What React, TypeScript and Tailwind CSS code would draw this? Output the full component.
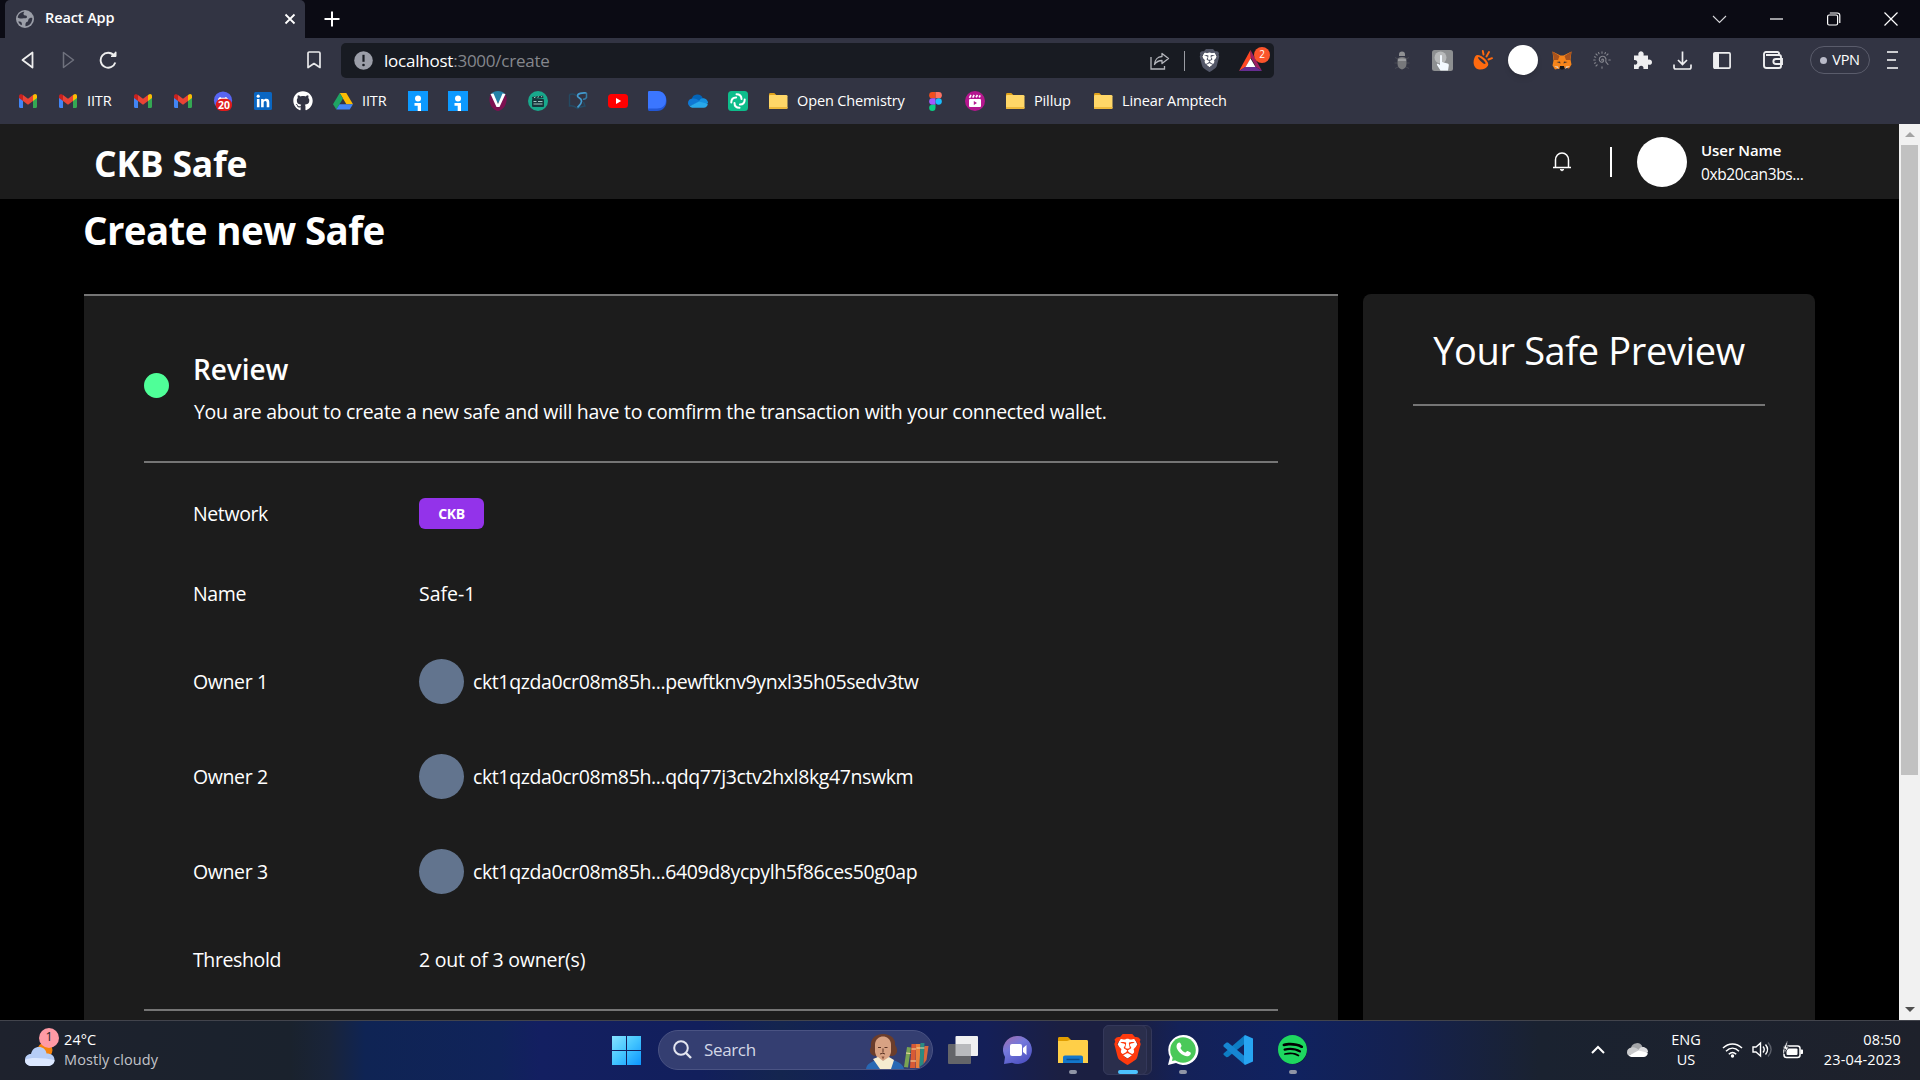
import type { ReactNode } from "react";
import { FaGithub } from "react-icons/fa";
import { SiBrave, SiSpotify } from "react-icons/si";

function GmailIcon() {
  return (
    <svg width="18" height="14" viewBox="0 0 18 14">
      <path d="M0 2v10.8C0 13.5.5 14 1.2 14H4V5z" fill="#4285f4" />
      <path d="M18 2v10.8c0 .7-.5 1.2-1.2 1.2H14V5z" fill="#34a853" />
      <path d="M14 1.2V7l4-3V1.9C18 .2 16 -.6 14.700.6z" fill="#fbbc04" />
      <path d="M4 7V1l5 3.8L14 1v6l-5 3.800z" fill="#ea4335" />
      <path d="M0 1.900V4l4 3V1.200L3.300.6C2-.4 0 .3 0 1.900z" fill="#c5221f" />
    </svg>
  );
}

function FolderIcon() {
  return (
    <svg width="20" height="20" viewBox="0 0 20 20">
      <path d="M1 3.500c0-.8.500-1.500 1.300-1.500h4l2 2H18v5H1z" fill="#e0a21b" />
      <rect x="1" y="4" width="18.500" height="14" rx="1.300" fill="#ffd768" />
      <path d="M1 16h18.500v.7c0 .8-.6 1.300-1.300 1.300H2.300c-.7 0-1.300-.5-1.300-1.300z" fill="#efba3c" />
    </svg>
  );
}

function DriveIcon() {
  return (
    <svg width="20" height="18" viewBox="0 0 20 18">
      <path d="M6.700 1h6.600L20 12.300h-6.600z" fill="#fbbc04" />
      <path d="M6.700 1L0 12.300 3.300 17.500 10 6.500z" fill="#1fa463" />
      <path d="M6.500 12.300H20l-3.300 5.200H3.300z" fill="#4285f4" />
    </svg>
  );
}

function DiscordIcon() {
  return (
    <svg width="22" height="22" viewBox="0 0 22 22">
      <circle cx="11" cy="10.500" r="10" fill="#5865f2" />
      <path d="M5 13c0-4 1.500-6.500 3-6.500l1 .8h4l1-.8c1.500 0 3 2.500 3 6.500z" fill="#fff" />
      <rect x="3" y="8.500" width="18" height="13.500" rx="6.500" fill="#e01b1b" />
      <text x="12" y="19.300" textAnchor="middle" fontSize="11.500" fontWeight="700" fill="#fff" fontFamily="Open Sans, sans-serif">20</text>
    </svg>
  );
}

function LinkedInIcon() {
  return (
    <svg width="18" height="18" viewBox="0 0 18 18">
      <rect width="18" height="18" rx="1.500" fill="#0a66c2" />
      <circle cx="4.200" cy="4.200" r="1.600" fill="#fff" />
      <path d="M2.900 7h2.600v8.200H2.900zM7.100 7h2.500v1.200c.5-.8 1.400-1.400 2.600-1.400 2.500 0 3.100 1.600 3.100 3.900v4.500h-2.600v-4c0-1.100-.2-2.100-1.400-2.100-1.300 0-1.600.9-1.600 2v4.100H7.100z" fill="#fff" />
    </svg>
  );
}

function InfoTileIcon() {
  return (
    <svg width="20" height="20" viewBox="0 0 20 20">
      <rect width="20" height="20" fill="#0c99ff" />
      <circle cx="10" cy="7.500" r="3" fill="#fff" />
      <path d="M6.500 12H13v8h-3.300v-5.300H6.500z" fill="#fff" />
    </svg>
  );
}

function VIcon() {
  return (
    <svg width="18" height="20" viewBox="0 0 18 20">
      <path d="M2 3C5-1 13-1 16 3l-7 9z" fill="#2382a8" />
      <path d="M1.500 3C-1.500 10 2 19 9 20c7-1 10.500-10 7.500-17L9 15z" fill="#7c1150" />
      <path d="M1.500 3l3-.5L9 13l4.500-10.500 3 .5L10.500 16h-3z" fill="#fff" />
    </svg>
  );
}

function ClapperIcon() {
  return (
    <svg width="20" height="20" viewBox="0 0 20 20">
      <circle cx="10" cy="10" r="10" fill="#18a98c" />
      <path d="M4 6l11-1.500.4 2.500L4.400 8.300z" fill="#17363b" />
      <rect x="4" y="8" width="12" height="8" rx="1" fill="#17363b" />
      <path d="M6 6.800l1.500-.8M9.500 6.400L11 5.600M13 6l1.300-.8M5.500 10.500h3M10 10.500h4.500M5.500 13h9" stroke="#c9eee5" strokeWidth=".8" />
    </svg>
  );
}

function BookPenIcon() {
  return (
    <svg width="20" height="18" viewBox="0 0 20 18" fill="none">
      <path d="M1.500 2.500c2-.7 5-.7 6.500 1M1.500 2.500V14c3-.8 5 0 8 2.500 2-1.500 4-2 7.500-2.500l-1.500-4" stroke="#254a63" strokeWidth="1.400" />
      <path d="M18.500 1c-4.500-.5-9 .5-9 3 0 2 4.500 1.500 4 5.500-.4 3-2 3.500-4 6" stroke="#429bd0" strokeWidth="1.700" />
      <path d="M18.500 1v4.500c-1 1.500-2.500 2-3.500 1.500" stroke="#357ba6" strokeWidth="1.500" />
    </svg>
  );
}

function YoutubeIcon() {
  return (
    <svg width="20" height="14" viewBox="0 0 20 14">
      <rect width="20" height="14" rx="3.500" fill="#f00" />
      <path d="M8 4l5.200 3L8 10z" fill="#fff" />
    </svg>
  );
}

function DIcon() {
  return (
    <svg width="19" height="20" viewBox="0 0 19 20">
      <path d="M0 1.500C0 .6.600 0 1.500 0H9c6 0 9.500 4.500 9.500 10S15 20 9 20H1.500C.6 20 0 19.400 0 18.500z" fill="#2257d6" />
      <path d="M0 1.500C0 .6.600 0 1.500 0H9c6 0 9 4 9 9s-3.500 8.500-9 8.500H0z" fill="#3b76ff" />
    </svg>
  );
}

function OneDriveIcon({ mono = false }: { mono?: boolean }) {
  return (
    <svg width="21" height="14" viewBox="0 0 21 14">
      <path d="M4 5a6 6 0 0 1 11.500-1L12 9 3 11z" fill={mono ? "#a3a5a8" : "#0364b8"} />
      <path d="M4.500 4.500C2 4.700 0 6.500 0 9.200 0 10.500.6 11.800 1.600 12.600L13 7.500 9 5C7.500 4.200 6 4.200 4.500 4.500z" fill={mono ? "#c9cacc" : "#0f78d4"} />
      <path d="M15.500 4c3.300-.1 5.500 2.300 5.500 5l-4 2-5.500-3.500C12 5.500 13.500 4.100 15.500 4z" fill={mono ? "#dddddf" : "#1490df"} />
      <path d="M1.600 12.600L11.500 7.500 20.800 9.800c0 2.400-1.800 4.200-4.300 4.200H4.500c-1 0-2.100-.5-2.900-1.400z" fill={mono ? "#ffffff" : "#28a8ea"} />
    </svg>
  );
}

function ElementIcon() {
  return (
    <svg width="20" height="20" viewBox="0 0 20 20">
      <rect width="20" height="20" rx="3.500" fill="#0dbd8b" />
      <g fill="none" stroke="#fff" strokeWidth="2" strokeLinecap="round">
        <path d="M8.500 3.300c3.200 0 5 2 5 4.800" />
        <path d="M16.700 8.500c0 3.200-2 5-4.800 5" />
        <path d="M11.500 16.700c-3.200 0-5-2-5-4.800" />
        <path d="M3.300 11.500c0-3.200 2-5 4.800-5" />
      </g>
    </svg>
  );
}

function FigmaIcon() {
  return (
    <svg width="13" height="19" viewBox="0 0 12 18">
      <path d="M3 0h3v6H3a3 3 0 0 1 0-6z" fill="#f24e1e" />
      <path d="M6 0h3a3 3 0 0 1 0 6H6z" fill="#ff7262" />
      <path d="M3 6h3v6H3a3 3 0 0 1 0-6z" fill="#a259ff" />
      <circle cx="9" cy="9" r="3" fill="#1abcfe" />
      <path d="M3 12h3v3a3 3 0 1 1-3-3z" fill="#0acf83" />
    </svg>
  );
}

function MovieIcon() {
  return (
    <svg width="20" height="20" viewBox="0 0 20 20">
      <circle cx="10" cy="10" r="10" fill="#b5178f" />
      <rect x="4" y="8" width="12" height="8" rx="1" fill="#fff" />
      <path d="M4.500 6.800L6 4M7.700 6.600L9.200 4M11 6.300L12.500 4M14.200 6.300l1-2" stroke="#fff" strokeWidth="1.600" />
      <path d="M8.800 10v4l3.200-2z" fill="#b5178f" />
    </svg>
  );
}

interface Bookmark {
  icon: ReactNode;
  label?: string;
  width: string;
}

const bookmarks: Bookmark[] = [
  { icon: <GmailIcon />, width: "w-10" },
  { icon: <GmailIcon />, label: "IITR", width: "w-[75px]" },
  { icon: <GmailIcon />, width: "w-10" },
  { icon: <GmailIcon />, width: "w-10" },
  { icon: <DiscordIcon />, width: "w-10" },
  { icon: <LinkedInIcon />, width: "w-10" },
  { icon: <FaGithub size={20} color="#fff" />, width: "w-10" },
  { icon: <DriveIcon />, label: "IITR", width: "w-[75px]" },
  { icon: <InfoTileIcon />, width: "w-10" },
  { icon: <InfoTileIcon />, width: "w-10" },
  { icon: <VIcon />, width: "w-10" },
  { icon: <ClapperIcon />, width: "w-10" },
  { icon: <BookPenIcon />, width: "w-10" },
  { icon: <YoutubeIcon />, width: "w-[39px]" },
  { icon: <DIcon />, width: "w-[41px]" },
  { icon: <OneDriveIcon />, width: "w-10" },
  { icon: <ElementIcon />, width: "w-10" },
  { icon: <FolderIcon />, label: "Open Chemistry", width: "w-[157px]" },
  { icon: <FigmaIcon />, width: "w-10" },
  { icon: <MovieIcon />, width: "w-10" },
  { icon: <FolderIcon />, label: "Pillup", width: "w-[88px]" },
  { icon: <FolderIcon />, label: "Linear Amptech", width: "w-[160px]" },
];

function TabStrip() {
  return (
    <div className="flex h-[38px] items-stretch bg-[#0b0b14] pl-[5px] pr-[22px]">
      <div className="flex w-[300px] items-center rounded-t-[5px] bg-[#323443] pl-[11px] pr-[9px]">
        <svg width="18" height="18" viewBox="0 0 18 18">
          <circle cx="9" cy="9" r="9" fill="#9b9ea8" />
          <path d="M8.500 1.800c-1 1-1.500 2.200-.5 3.200 1.200 1 2.500 0 3 1.700.3 1.300-1.500 1.700-2.800 1.600C6 8 4.500 9.500 1.700 7.500 2 4.500 5 1.800 8.500 1.800z" fill="#323443" />
          <path d="M16.300 8c-1.500-.5-3 .2-3.700 1.200-1 1.300.2 2-1.300 2.600-1.800.6-2 2-1.800 4.500 4 0 7-4 6.800-8.300zM2.200 11.500c1.500-.3 3 .2 3.500 1.300.3.900.2 1.700 0 2.500-1.500-.7-2.800-2-3.500-3.800z" fill="#323443" />
        </svg>
        <span className="-mt-[2px] ml-[11px] text-[14.500px] font-semibold tracking-[-0.1px]">React App</span>
        <svg className="ml-auto" width="12" height="12" viewBox="0 0 12 12" stroke="#fff" strokeWidth="1.800">
          <path d="M1.500 1.500l9 9M10.500 1.500l-9 9" />
        </svg>
      </div>
      <div className="flex items-center pl-[19px]">
        <svg width="16" height="16" viewBox="0 0 16 16" stroke="#fff" strokeWidth="2">
          <path d="M8 .5v15M.5 8h15" />
        </svg>
      </div>
      <div className="ml-auto flex items-center">
        <svg width="58" height="14" viewBox="0 0 58 14" fill="none" stroke="#d6d6da" strokeWidth="1.100">
          <path d="M9 4l6.500 6.500L22 4" />
        </svg>
        <svg width="58" height="14" viewBox="0 0 58 14" stroke="#fff" strokeWidth="1.200">
          <path d="M8 7h13" />
        </svg>
        <svg width="64" height="14" viewBox="0 0 64 14" fill="none" stroke="#fff" strokeWidth="1.200">
          <rect x="7.600" y="3" width="10" height="10" rx="1.500" />
          <path d="M9.800 1h7.400c1.600 0 2.600 1 2.600 2.600v7.400" />
        </svg>
        <svg width="14" height="14" viewBox="0 0 14 14" stroke="#fff" strokeWidth="1.200">
          <path d="M.5.5l13 13M13.500.5l-13 13" />
        </svg>
      </div>
    </div>
  );
}

function Slot({ width, children }: { width: string; children: ReactNode }) {
  return <div className={`flex h-10 shrink-0 items-center justify-center ${width}`}>{children}</div>;
}

function BraveLion({ size, color }: { size: number; color: string }) {
  return (
    <svg width={size} height={size} viewBox="0 0 24 24">
      <path d="M6.500 3h11l2 5-3 8-4.500 3-4.500-3-3-8z" fill="#fff" />
      <SiBrave size={24} color={color} />
    </svg>
  );
}

function AddressBar() {
  return (
    <div className="flex h-[35px] w-[933px] shrink-0 items-center rounded-[5px] bg-[#181b22] pl-[13px] pr-[3px]">
      <svg width="19" height="19" viewBox="0 0 19 19">
        <circle cx="9.500" cy="9.500" r="9.300" fill="#9b9ea8" />
        <path d="M9.500 3.800v7" stroke="#181b22" strokeWidth="2.200" />
        <circle cx="9.500" cy="14" r="1.300" fill="#181b22" />
      </svg>
      <span className="ml-[11px] text-[17px] tracking-[-0.23px] text-[#85878d]">
        <span className="text-white">localhost</span>:3000/create
      </span>
      <div className="ml-auto flex items-center">
        <svg width="20" height="18" viewBox="0 0 20 18" fill="none" stroke="#b4b6bc" strokeWidth="1.300">
          <path d="M1 5v12h13.500v-3" />
          <path d="M12 1.500l6.500 5-6.500 5v-3c-3.500 0-5.500 1-7.500 4 .3-4.500 3-8 7.500-8z" strokeLinejoin="round" />
        </svg>
        <div className="ml-[14px] h-5 w-px bg-[#9a9ca3]" />
        <div className="ml-[13px]">
          <BraveLion size={23} color="#535768" />
        </div>
        <div className="relative ml-[17px] w-[33px]">
          <svg width="26" height="22" viewBox="0 0 26 22">
            <path d="M12.500 0L1 21l6.500-4L13 8z" fill="#ff4724" />
            <path d="M12.500 0L24 21l-6-4L12.500 7z" fill="#9e1f63" />
            <path d="M1 21h23l-6-4H7z" fill="#662d91" />
            <path d="M12.500 8.500l5 8.500h-10z" fill="#fff" />
          </svg>
          <span className="absolute right-[1px] -top-[3px] flex h-4 w-4 items-center justify-center rounded-full bg-[#fb542b] text-[10px]">2</span>
        </div>
      </div>
    </div>
  );
}

function Toolbar() {
  return (
    <div className="flex h-[45px] items-center">
      <Slot width="w-[55px]">
        <svg className="-mt-[2px]" width="13" height="18" viewBox="0 0 13 18" fill="none" stroke="#eee" strokeWidth="1.800" strokeLinejoin="round">
          <path d="M11.500 1.500v15L1.500 9z" />
        </svg>
      </Slot>
      <Slot width="w-[26px]">
        <svg className="-mt-[2px]" width="13" height="18" viewBox="0 0 13 18" fill="none" stroke="#6f717d" strokeWidth="1.500" strokeLinejoin="round">
          <path d="M1.500 1.500v15L11.500 9z" />
        </svg>
      </Slot>
      <Slot width="w-[54px]">
        <svg className="-mt-[2px]" width="18" height="18" viewBox="0 0 18 18" fill="none" stroke="#eee" strokeWidth="1.900">
          <path d="M15 4.500A7.500 7.500 0 1 0 16.300 11.500" />
          <path d="M12 5.500h5V.8z" fill="#eee" strokeWidth="1" />
        </svg>
      </Slot>
      <div className="flex flex-1 justify-end pr-[20px]">
        <svg className="-mt-[1px]" width="14" height="18" viewBox="0 0 14 18" fill="none" stroke="#e8e8ea" strokeWidth="1.700" strokeLinejoin="round">
          <path d="M1 2.200C1 1.500 1.500 1 2.200 1h9.600c.7 0 1.200.5 1.200 1.200V16.500l-6-4-6 4z" />
        </svg>
      </div>
      <AddressBar />
      <div className="flex w-[646px] items-center pb-[1px] pl-[108px]">
        <Slot width="w-10">
          <svg width="16" height="20" viewBox="0 0 16 20">
            <path d="M4 9L1 7.500M12 9l3-1.500M3.500 13H.5M12.500 13h3M4 17l-3 1.500M12 17l3 1.500" stroke="#484a55" />
            <path d="M5 4.500a3 3 0 0 1 6 0V6H5z" fill="#8f9093" />
            <path d="M3.500 10c0-2 1.500-3 4.500-3s4.500 1 4.500 3v4c0 3-2 5-4.500 5.500C5.500 19 3.500 17 3.500 14z" fill="#77787b" />
            <path d="M4 9.500c1.500-1.300 6.500-1.300 8 0V11H4z" fill="#9b9c9f" />
          </svg>
        </Slot>
        <Slot width="w-10">
          <svg width="21" height="21" viewBox="0 0 21 21">
            <rect width="21" height="21" rx="2.500" fill="#8d8f91" />
            <circle cx="8.500" cy="7.500" r="6" fill="#b7b9ba" />
            <path d="M8 6c0-1.300 2-1.300 2 0v6l5.500 1.500c1 .3 1.500 1 1.300 2L16 20.500H8.500L5 15c-.5-1 .5-1.800 1.500-1L8 15z" fill="#f3f9ff" />
          </svg>
        </Slot>
        <Slot width="w-[41px]">
          <svg width="20" height="20" viewBox="0 0 20 20">
            <path d="M3 5.500C-.5 9-.8 19 6.500 19.500c4 .2 7-1 8.500-4z" fill="#ff6a0f" />
            <ellipse cx="9" cy="10.500" rx="3.200" ry="7.800" transform="rotate(-50 9 10.500)" fill="#ff6a0f" />
            <ellipse cx="8.800" cy="10.500" rx="1.200" ry="4.800" transform="rotate(-48 8.800 10.500)" fill="#323443" />
            <path d="M10.500 4.500L9.800 1M13.500 6.500L16 2M15.500 9.500l3.500-1.300" stroke="#ff6a0f" strokeWidth="1.900" strokeLinecap="round" />
          </svg>
        </Slot>
        <Slot width="w-[39px]">
          <div className="h-[30px] w-[30px] shrink-0 rounded-full bg-white shadow-md" />
        </Slot>
        <Slot width="w-10">
          <svg width="20" height="19" viewBox="0 0 20 19">
            <path d="M.5.5l8 4h3l8-4-1 8 1 5-2.500 4-4-1-1.500 1.500h-3L7 17.500l-4 1-2.500-4 1-5z" fill="#f6851b" />
            <path d="M.5.500L7.500 5 6 9 2 9zM19.500.500L12.500 5 14 9h4z" fill="#a8521d" />
            <path d="M4.500 11l3.500-.5.500 2zM15.500 11l-3.500-.5-.5 2z" fill="#44352f" />
            <path d="M2 15l4 .5L7 18zM18 15l-4 .5L13 18z" fill="#e8d2bd" />
            <path d="M8 15h4l.5 2.500L11 18.500H9L7.500 17.500z" fill="#161616" />
          </svg>
        </Slot>
        <Slot width="w-10">
          <svg width="18" height="18" viewBox="0 0 18 18" fill="none" stroke="#85868e" strokeWidth="1.100" strokeLinecap="round">
            <path d="M9 9.500c-.8-1 .8-2 1.500-.8.800 1.600-1 3-2.700 2.300-2.300-1-2-4.500.5-5.500 3-1 5.500 1.500 4.500 4.500-.3 1.500 1.200 2 2.200 3.500" />
            <path d="M9 .7v1.500M3 3l1.200 1.200M.7 9h1.500M3 15l1.200-1.200M9 17.300v-1.500M15 3l-1.200 1.200M17.300 9h-1.500M5.500 1.500l.6 1.200M12.500 1.500l-.6 1.200M1.500 5.800l1.200.5M1.500 12.300l1.200-.5" />
          </svg>
        </Slot>
        <Slot width="w-10">
          <svg width="19" height="18" viewBox="0 0 19 18">
            <path d="M1 4.500h4.500C4.800 2.500 5.700.2 8 .2s3.200 2.300 2.500 4.300H15v4.200c2-.6 4 .3 4 2.500s-2 3.100-4 2.400V18h-4.600c.6-2-.6-3.300-2.200-3.300S5.200 16 5.700 18H1v-4.500c2.200.6 3.300-.6 3.300-2.200S3.200 8.500 1 9z" fill="#eeeef0" />
          </svg>
        </Slot>
        <Slot width="w-10">
          <svg width="19" height="19" viewBox="0 0 19 19" fill="none" stroke="#eeeef0" strokeWidth="1.700">
            <path d="M9.500.5v12.500M5 9l4.500 4.500L14 9M1 13.500v2.800c0 1 .7 1.700 1.700 1.700h13.600c1 0 1.700-.7 1.700-1.700v-2.800" />
          </svg>
        </Slot>
        <Slot width="w-10">
          <svg width="18" height="17" viewBox="0 0 18 17">
            <rect x=".9" y=".9" width="16.200" height="15.200" rx="1" fill="none" stroke="#eeeef0" strokeWidth="1.700" />
            <rect x="1" y="1" width="5" height="15" fill="#eeeef0" />
          </svg>
        </Slot>
        <Slot width="w-[62px]">
          <svg width="20" height="18" viewBox="0 0 20 18" fill="none" stroke="#eeeef0" strokeWidth="1.900">
            <path d="M16 4V2.500C16 1.700 15.300 1 14.500 1H3C1.800 1 1 1.800 1 3v11.500C1 16 2 17 3.500 17H16c1.300 0 2-.7 2-2V6c0-1.200-.8-2-2-2H3" />
            <path d="M19 8h-6c-3.500 0-3.500 5 0 5h6z" />
          </svg>
        </Slot>
        <div className="ml-[6px] flex h-7 w-[60px] shrink-0 items-center justify-center gap-[5px] rounded-full border border-[#5a5c6b]">
          <span className="h-[7px] w-[7px] rounded-full bg-[#b9bac8]" />
          <span className="text-[14.500px] tracking-[-0.3px]">VPN</span>
        </div>
        <svg className="ml-[17px] shrink-0" width="12" height="18" viewBox="0 0 12 18" stroke="#fff" strokeWidth="1.700">
          <path d="M0 1h11M0 9h9M0 17h11" />
        </svg>
      </div>
    </div>
  );
}

function BookmarksBar() {
  return (
    <div className="flex h-[41px] items-start pl-[18px] pt-[8px]">
      {bookmarks.map((bookmark, i) => (
        <div key={i} className={`flex h-5 shrink-0 items-center ${bookmark.width}`}>
          <span className="flex w-5 shrink-0 items-center justify-center">{bookmark.icon}</span>
          {bookmark.label && (
            <span className="ml-[9px] whitespace-nowrap text-[14.500px] tracking-[-0.13px]">{bookmark.label}</span>
          )}
        </div>
      ))}
    </div>
  );
}

function SiteHeader() {
  return (
    <header className="flex h-[75px] shrink-0 items-center bg-[#1c1c1c] pl-[94px] pr-[94px]">
      <h1 className="mt-[5px] text-[35.500px] font-bold tracking-[-0.2px]">CKB Safe</h1>
      <svg className="ml-auto" width="18" height="20" viewBox="0 0 18 20" fill="none" stroke="#fff" strokeWidth="1.500">
        <path d="M2.500 15.500V8c0-4 2.800-7 6.500-7s6.500 3 6.500 7v7.500M0 15.500h18" />
        <path d="M7 17.500h4l-2 1.500z" fill="#fff" strokeWidth=".8" />
      </svg>
      <div className="ml-[39px] h-[30px] w-[2px] bg-white" />
      <div className="ml-[25px] h-[50px] w-[50px] rounded-full bg-white" />
      <div className="ml-[14px] w-[104px] whitespace-nowrap">
        <p className="text-[15px] font-semibold leading-6 tracking-[-0.05px]">User Name</p>
        <p className="text-[15.500px] leading-6 tracking-[-0.38px]">0xb20can3bs...</p>
      </div>
    </header>
  );
}

const owners = [
  "ckt1qzda0cr08m85h...pewftknv9ynxl35h05sedv3tw",
  "ckt1qzda0cr08m85h...qdq77j3ctv2hxl8kg47nswkm",
  "ckt1qzda0cr08m85h...6409d8ycpylh5f86ces50g0ap",
];

function ReviewRow({ label, height, children }: { label: string; height: string; children: ReactNode }) {
  return (
    <div className={`flex shrink-0 items-center pl-[49px] text-[19.500px] ${height}`}>
      <span className="w-[226px] shrink-0 tracking-[-0.38px]">{label}</span>
      {children}
    </div>
  );
}

function ReviewCard() {
  return (
    <section className="h-[900px] w-[1254px] shrink-0 border-t-2 border-[#757575] bg-[#1c1c1c] px-[60px] pt-[50px]">
      <div className="flex h-[117px] items-start border-b-2 border-[#757575]">
        <div className="mt-[27px] h-[25px] w-[25px] rounded-full bg-[#4fff98]" />
        <div className="ml-6 pt-[3px]">
          <h2 className="text-[28px] font-semibold leading-10 tracking-[-0.1px]">Review</h2>
          <p className="mt-[9px] whitespace-nowrap pl-px text-[19.500px] leading-7 tracking-[-0.28px]">
            You are about to create a new safe and will have to comfirm the transaction with your connected wallet.
          </p>
        </div>
      </div>
      <div className="flex h-[548px] flex-col border-b-2 border-[#757575] pt-[10px]">
        <ReviewRow label="Network" height="h-[81px]">
          <span className="flex h-[31px] w-[65px] items-center justify-center rounded-md bg-[#9333ea] text-[14px] font-bold tracking-[-0.4px]">CKB</span>
        </ReviewRow>
        <ReviewRow label="Name" height="h-20">Safe-1</ReviewRow>
        {owners.map((owner, i) => (
          <ReviewRow key={owner} label={`Owner ${i + 1}`} height="h-[95px]">
            <span className="h-[45px] w-[45px] rounded-full bg-slate-500" />
            <span className="ml-[9px] tracking-[-0.39px]">{owner}</span>
          </ReviewRow>
        ))}
        <ReviewRow label="Threshold" height="h-[81px]">
          <span className="tracking-[-0.2px]">2 out of 3 owner(s)</span>
        </ReviewRow>
      </div>
    </section>
  );
}

function ScrollBar() {
  return (
    <div className="flex w-[21px] shrink-0 flex-col items-center bg-[#f1f1f1]">
      <div className="flex h-[21px] items-center">
        <svg width="10" height="5" viewBox="0 0 10 5"><path d="M0 5l5-5 5 5z" fill="#a3a3a3" /></svg>
      </div>
      <div className="h-[630px] w-[17px] bg-[#c1c1c1]" />
      <div className="mt-auto flex h-[21px] items-center">
        <svg width="10" height="5" viewBox="0 0 10 5"><path d="M0 0l5 5 5-5z" fill="#505050" /></svg>
      </div>
    </div>
  );
}

function TaskSlot({ indicator, children }: { indicator?: boolean; children: ReactNode }) {
  return (
    <div className="relative flex h-[50px] w-[55px] shrink-0 items-center justify-center">
      {children}
      {indicator && <span className="absolute bottom-px h-1 w-2 rounded-full bg-[#9095a6]" />}
    </div>
  );
}

function Taskbar() {
  return (
    <footer className="flex h-[60px] items-center border-t border-[#42444c] pb-[2px] bg-[linear-gradient(90deg,#1e222d_0px,#1a222d_290px,#19243a_330px,#0f2454_365px,#10235a_500px,#131f61_540px,#121f5c_700px,#14254f_780px,#121f5a_900px,#141f58_985px,#1b1f42_1060px,#1b1f40_1130px,#142158_1180px,#102260_1290px,#142150_1400px,#1a2230_1540px,#1e212b_1920px)]">
      <div className="flex w-[611px] items-center pl-[24px]">
        <div className="relative h-[44px] w-[34px]">
          <svg className="absolute left-0 top-[10px]" width="32" height="30" viewBox="0 0 32 30">
            <circle cx="21" cy="12" r="7.500" fill="#f5820b" />
            <path d="M8 28C3.500 28 1 25.500 1 22s2.500-6 6-6c1-4.500 4-7 8-7s7 2.500 7.500 6.500c4.500 0 8 2 8 6.500 0 3.500-3 6-7 6z" fill="#b6cdf6" />
            <path d="M8 28C3.500 28 1 25.500 1 22c4-3 20-2 29.500 0 0 3.500-3 6-7 6z" fill="#dce8ff" />
          </svg>
          <span className="absolute left-[15px] top-0 flex h-5 w-5 items-center justify-center rounded-full bg-[#ff9aa5] text-[12.500px] text-[#1d1d24]">1</span>
        </div>
        <div className="ml-[6px] text-[14.500px] leading-5 tracking-[0.1px]">
          <p>24°C</p>
          <p className="text-[#c2c4ca]">Mostly cloudy</p>
        </div>
      </div>
      <svg className="shrink-0" width="30" height="30" viewBox="0 0 30 30">
        <defs>
          <linearGradient id="start" gradientUnits="userSpaceOnUse" x1="0" y1="0" x2="30" y2="30">
            <stop offset="0" stopColor="#8be4ff" />
            <stop offset=".5" stopColor="#45c6ff" />
            <stop offset="1" stopColor="#0c95ff" />
          </linearGradient>
        </defs>
        <path d="M1 1h14v14H1zM16 1h14v14H16zM1 16h14v14H1zM16 16h14v14H16z" fill="url(#start)" />
      </svg>
      <div className="ml-[17px] flex h-10 w-[275px] shrink-0 items-center rounded-full border border-[#4a5383] bg-[#343e71] pl-[14px] pr-[2px]">
        <svg width="19" height="19" viewBox="0 0 19 19" fill="none" stroke="#e4e6f0" strokeWidth="2">
          <circle cx="8" cy="8" r="6.800" />
          <path d="M13 13l5 5" strokeWidth="2.400" />
        </svg>
        <span className="ml-[12px] text-[17px] tracking-[-0.35px] text-[#d3d7e6]">Search</span>
        <svg className="ml-auto self-end" width="64" height="36" viewBox="0 0 64 36">
          <path d="M5 14C4 6 9 1 17 1s13 5 12 11c4 5 2 11-3 11H10c-5 0-8-5-5-9z" fill="#6b3d2c" />
          <path d="M0 36c1-6 6-7 12-10h12c6 2 13 4 14 10z" fill="#2868b4" />
          <path d="M9 11c1-10 15-10 16 0v8c-1 5-4 9-8 9s-7-4-8-9z" fill="#d8a283" />
          <path d="M7 26l5-2 5 4 6-4 5 3-3 9H14z" fill="#f6ecd0" />
          <path d="M12 14.500h3M18.500 14.500h3M17 15.500v4M14 21q3-1.500 5 0" stroke="#5a3324" fill="none" />
          <path d="M15.500 23.500h3l-1.500 3z" fill="#8a543c" />
          <path d="M41 14l4 .5-3 20-4-.5z" fill="#79a353" />
          <path d="M45.500 11h4.500l-.5 24h-5.500z" fill="#d85a35" />
          <path d="M50 11h4.500l-1 24H50z" fill="#e8803c" />
          <path d="M54.500 10h4l-1 21-4 3z" fill="#2a8b82" />
          <path d="M58.500 13h4l-2 14-3 4z" fill="#d8693b" />
          <path d="M45.500 16H50M44.500 28H50M50.500 15h4M54.500 15h4M40 20l4.500.5" stroke="#f6dda0" strokeWidth="1.200" />
        </svg>
      </div>
      <div className="ml-[2px] flex items-center">
        <TaskSlot>
          <svg width="32" height="28" viewBox="0 0 32 28">
            <rect x="8.500" width="22.500" height="20" rx="1" fill="#f0f0f1" />
            <rect x="1" y="8" width="23" height="20" rx="1" fill="#646569" />
            <path d="M8.500 8H24v12H8.500z" fill="#b9babd" />
          </svg>
        </TaskSlot>
        <TaskSlot>
          <svg width="30" height="30" viewBox="0 0 30 30">
            <defs>
              <linearGradient id="chat" x1="0" y1="0" x2=".6" y2="1">
                <stop offset="0" stopColor="#a66ca8" />
                <stop offset=".45" stopColor="#7479dc" />
                <stop offset="1" stopColor="#5054c4" />
              </linearGradient>
            </defs>
            <path d="M15 1a14 14 0 1 1-6 26.700L1 29l1-7A14 14 0 0 1 15 1z" fill="url(#chat)" />
            <rect x="7" y="9" width="12" height="12" rx="2" fill="#fff" />
            <path d="M20 13l3.500-3v10L20 17z" fill="#fff" />
          </svg>
        </TaskSlot>
        <TaskSlot indicator>
          <svg width="30" height="28" viewBox="0 0 30 28">
            <path d="M0 2.500C0 1.500.6 1 1.500 1H10l3 3-3 4H0z" fill="#e19d00" />
            <path d="M0 5h9l3-1h16.500c1 0 1.500.6 1.500 1.500V27H0z" fill="#ffcf48" />
            <path d="M5 27v-5.500c0-1.300.8-2 2-2h16c1.200 0 2 .7 2 2V27z" fill="#1377cc" />
            <path d="M8.500 23.500h13" stroke="#0a4c8c" strokeWidth="1.500" />
          </svg>
        </TaskSlot>
        <div className="relative flex h-[50px] w-[55px] items-center">
          <div className="ml-[3px] h-[50px] w-[49px] rounded-md border border-[#34385a] bg-[#252946]" />
          <div className="absolute left-[3px] flex h-[50px] w-[44px] items-center justify-center rounded-md border border-[#34385a] bg-[#2a2e4c] pl-[5px]">
            <BraveLion size={31} color="#ff3a0e" />
          </div>
          <span className="absolute bottom-px left-[18px] h-1 w-5 rounded-full bg-[#4cc2ff]" />
        </div>
        <TaskSlot indicator>
          <svg width="32" height="32" viewBox="0 0 32 32">
            <path d="M16 1a15 15 0 1 1-7 28L1 31l2-8A15 15 0 0 1 16 1z" fill="#fff" />
            <circle cx="16" cy="16" r="12.800" fill="#4ac959" />
            <path d="M5 27l1-5 4 4z" fill="#4ac959" />
            <path d="M11 9c1-.9 2-.8 2.500.3l1 2.200c.4.900-1.300 2-1 2.800 1 2 2.500 3.300 4.600 4.200.8.300 1.700-1.800 2.500-1.500l2.600 1.300c1 .5.700 1.800-.1 2.700-1.500 1.700-4 1.500-6 .6-3.500-1.500-6-4-7.300-7.300-.6-2-.3-4 1.200-5.300z" fill="#fff" />
          </svg>
        </TaskSlot>
        <TaskSlot>
          <svg width="30" height="30" viewBox="0 0 30 30">
            <path d="M22 0v8.500L5 22l-1.500.2-3-2.400V18.500L22 0z" fill="#0d7dc4" />
            <path d="M3.500 7.500L5 7.600 22 21.500V30L.5 11.500V10z" fill="#1686d2" />
            <path d="M22 0l8 3.500v23L22 30l-1-2V2z" fill="#27a5f2" />
          </svg>
        </TaskSlot>
        <TaskSlot indicator>
          <span className="flex h-[28px] w-[28px] items-center justify-center rounded-full bg-black">
            <SiSpotify size={29} color="#1ed760" className="shrink-0" />
          </span>
        </TaskSlot>
      </div>
      <div className="ml-auto flex items-center pr-[19px] text-[14.500px]">
        <svg width="14" height="9" viewBox="0 0 14 9" fill="none" stroke="#fff" strokeWidth="2">
          <path d="M1 8l6-6 6 6" />
        </svg>
        <div className="ml-[22px]"><OneDriveIcon mono /></div>
        <div className="ml-[22px] w-[32px] text-center leading-5">
          <p>ENG</p>
          <p>US</p>
        </div>
        <svg className="ml-[20px]" width="21" height="16" viewBox="0 0 21 16" fill="none" stroke="#fff" strokeWidth="1.500">
          <path d="M1 6c5.500-5.500 13.500-5.500 19 0M4 9.200c4-4 9-4 13 0M6.800 12.200c2.400-2.300 5-2.300 7.400 0" />
          <circle cx="10.500" cy="14" r="1.700" fill="#fff" stroke="none" />
        </svg>
        <svg className="ml-[9px]" width="20" height="17" viewBox="0 0 20 17" fill="none" stroke="#fff" strokeWidth="1.400">
          <path d="M1 6v5h3l4.500 4V2L4 6zM11 5.500c1.500 1.800 1.500 4.200 0 6M13.500 3.500c2.500 3 2.500 7 0 10" />
          <path d="M16 1.500c4 4.500 4 9.500 0 14" stroke="#5b5f69" />
        </svg>
        <svg className="ml-[10px]" width="21" height="18" viewBox="0 0 21 18">
          <rect x="2" y="5" width="16" height="11.500" rx="2.500" fill="none" stroke="#fff" strokeWidth="1.500" />
          <rect x="4.500" y="7.500" width="11" height="6.500" rx="1" fill="#fff" />
          <path d="M18.500 8.500H20c.6 0 1 .4 1 1V12c0 .6-.4 1-1 1h-1.500z" fill="#fff" />
          <path d="M5 0L1 8h2.500L2 13l5-7H4.500L6 0z" fill="#fff" stroke="#1c212c" strokeWidth=".8" />
        </svg>
        <div className="w-[98px] text-right leading-5 tracking-[0.15px]">
          <p>08:50</p>
          <p>23-04-2023</p>
        </div>
      </div>
    </footer>
  );
}

export default function App() {
  return (
    <div className="flex h-[1080px] w-[1920px] flex-col overflow-hidden bg-black font-['Open_Sans',sans-serif] text-white">
      <TabStrip />
      <div className="flex h-[86px] shrink-0 flex-col bg-[#323443]">
        <Toolbar />
        <BookmarksBar />
      </div>
      <div className="flex h-[896px] shrink-0 overflow-hidden">
        <main className="flex flex-1 flex-col overflow-hidden">
          <SiteHeader />
          <div className="px-[84px]">
            <h2 className="-ml-px h-[95px] pt-px text-[38.500px] font-bold leading-[60px] tracking-[-0.6px]">Create new Safe</h2>
            <div className="flex gap-[25px]">
              <ReviewCard />
              <aside className="h-[900px] w-[452px] rounded-lg bg-[#1c1c1c] px-[50px]">
                <h3 className="h-[112px] whitespace-nowrap border-b-2 border-[#757575] pt-[26px] text-center text-[38px] leading-[60px] tracking-[-0.36px]">
                  Your Safe Preview
                </h3>
              </aside>
            </div>
          </div>
        </main>
        <ScrollBar />
      </div>
      <Taskbar />
    </div>
  );
}
